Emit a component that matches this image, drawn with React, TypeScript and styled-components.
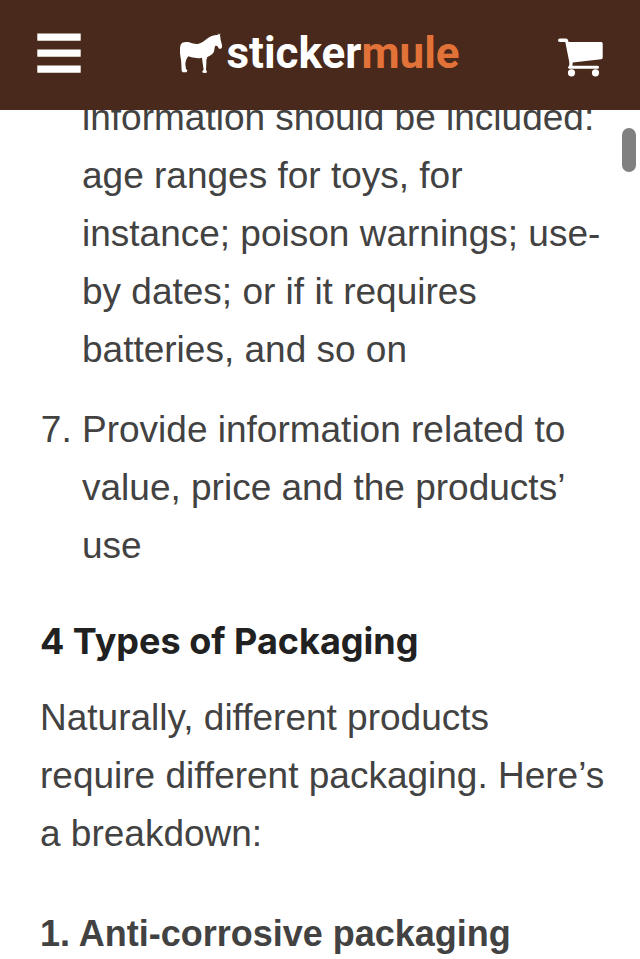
import React from "react";
import styled, { createGlobalStyle } from "styled-components";

const GlobalStyle = createGlobalStyle`
  * { box-sizing: border-box; }
  body { margin: 0; background: #fff; }
`;

const Page = styled.div`
  position: relative;
  display: flex;
  flex-direction: column;
  height: 100vh;
  overflow: hidden;
  color: #424242;
  font-family: "Liberation Sans", Arial, sans-serif;
  font-size: 37px;
  line-height: 58px;
`;

const Header = styled.header`
  flex: none;
  display: grid;
  grid-template-columns: 1fr auto 1fr;
  align-items: center;
  height: 110px;
  padding: 0 36px 4px;
  background: #48291b;
`;

const IconButton = styled.button<{ $end?: boolean }>`
  display: flex;
  justify-self: ${(p) => (p.$end ? "end" : "start")};
  padding: ${(p) => (p.$end ? "10px 0 0" : "0")};
  border: 0;
  background: none;
  color: #fff;
  cursor: pointer;
`;

const Logo = styled.a`
  display: flex;
  align-items: center;
  gap: 4px;
  color: #fff;
  font-family: Roboto, "Open Sans", sans-serif;
  font-size: 44px;
  font-weight: 700;
  line-height: 56px;
  text-decoration: none;
`;

const LogoAccent = styled.span`
  color: #e37239;
`;

const Article = styled.main`
  flex: 1;
  min-height: 0;
  overflow: hidden;
  padding: 0 32px 0 40px;
`;

const Rules = styled.ol`
  margin: -21px 0 0;
  padding: 0 0 0 42px;
`;

const Rule = styled.li<{ $continued?: boolean }>`
  margin-bottom: 22px;
  list-style: ${(p) => (p.$continued ? "none" : "decimal")};
`;

const Title = styled.h2`
  margin: 43px 0 25px;
  color: #212121;
  font-family: Inter, sans-serif;
  font-size: 36px;
  font-weight: 700;
  line-height: 46px;
`;

const Paragraph = styled.p`
  margin: 0 0 42px;
`;

const Subtitle = styled.h3`
  margin: 0;
  font-size: 36px;
  font-weight: 700;
`;

const ScrollThumb = styled.div`
  position: absolute;
  top: 128px;
  right: 4px;
  width: 14px;
  height: 44px;
  border-radius: 7px;
  background: #808080;
`;

const MenuIcon = () => (
  <svg width="46" height="40" viewBox="0 0 46 40" fill="currentColor" aria-hidden="true">
    <path d="M1.3 .4h43.4v7.4H1.3zM1.3 16.4h43.4v7.4H1.3zM1.3 32.4h43.4v7.4H1.3z" />
  </svg>
);

const MuleIcon = () => (
  <svg width="42" height="40" viewBox="30 21 126 120" fill="currentColor" aria-hidden="true">
    <path d="M32 56C36 47 48 47 58 49C67 52 75 55 84 54C95 51 102 45 110 39C118 32 128 28 138 27L144 27L143 21L147 26L151 22L150 30C152 34 151 40 153 46L156 58C157 65 154 70 147 68L142 60L136 59C133 64 134 71 131 79C127 87 117 90 112 93C109 99 109 105 109 113L108 131L111 138L108 141L98 140L97 135L101 131L98 112L96 95C85 98 74 96 64 94L55 91C49 98 47 106 46 114L48 129L52 133L50 139L38 139L35 135L34 115L33 101C30 88 28 68 32 56Z" />
  </svg>
);

const CartIcon = () => (
  <svg width="46" height="40" viewBox="0 0 46 40" fill="currentColor" aria-hidden="true">
    <path d="M1.800 .6H8q1.700 0 2.100 1.700l.5 1.800h32.600q1.500 0 1.500 1.500v14q0 1.500-1.500 1.700L14.700 24.600l-.3 3.600h-3.200l.1-4L7.300 4H1.800Q0 4 0 2.300T1.800 .6Z" />
    <path d="M11.200 27.800h28.500q1.300 0 1.300 1.500t-1.300 1.500H11.200q-1 0-1-1.500t1-1.500Z" />
    <circle cx="13.500" cy="34.800" r="3.600" />
    <circle cx="37.500" cy="34.800" r="3.600" />
  </svg>
);

export default function App() {
  return (
    <Page>
      <GlobalStyle />
      <Header>
        <IconButton type="button" aria-label="Menu">
          <MenuIcon />
        </IconButton>
        <Logo href="#" aria-label="stickermule">
          <MuleIcon />
          <span>
            sticker<LogoAccent>mule</LogoAccent>
          </span>
        </Logo>
        <IconButton type="button" aria-label="Cart" $end>
          <CartIcon />
        </IconButton>
      </Header>
      <Article>
        <Rules start={6}>
          <Rule $continued>
            information should be included: age ranges for toys, for instance; poison
            warnings; use-by dates; or if it requires batteries, and so on
          </Rule>
          <Rule>Provide information related to value, price and the products’ use</Rule>
        </Rules>
        <Title>4 Types of Packaging</Title>
        <Paragraph>
          Naturally, different products require different packaging. Here’s a breakdown:
        </Paragraph>
        <Subtitle>1. Anti-corrosive packaging</Subtitle>
      </Article>
      <ScrollThumb />
    </Page>
  );
}
